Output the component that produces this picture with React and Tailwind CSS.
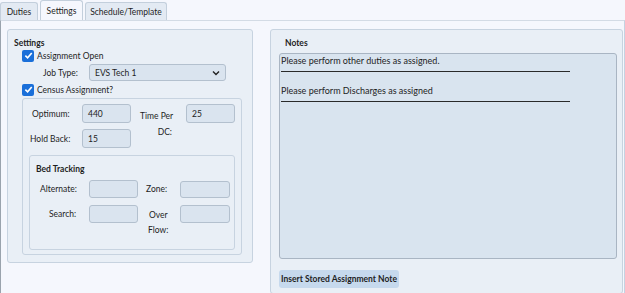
import React from "react";

function Check() {
  return (
    <span className="flex h-[12px] w-[12px] items-center justify-center rounded-[2px] bg-[#1a6fd9]">
      <svg width="9" height="9" viewBox="0 0 10 10">
        <path d="M1.5 5.2 L4 7.6 L8.6 2.2" stroke="white" strokeWidth="1.8" fill="none" />
      </svg>
    </span>
  );
}

function Input({ w = "w-[49px]", h = "h-[19px]", value = "" }) {
  return (
    <div className={`${w} ${h} flex items-center rounded-[3px] border border-[#b3c0ce] bg-[#dae4ef] pl-[5px] text-[8.5px] text-[#222]`}>
      {value}
    </div>
  );
}

export default function App() {
  return (
    <div className="h-[293px] w-[625px] overflow-hidden bg-[#f5f7fd] text-[8.5px] leading-[12px] text-[#1e1e1e]" style={{ fontFamily: 'Lato, "Open Sans", sans-serif' }}>
      {/* tabs */}
      <div className="flex h-[20px] items-end gap-[2px]">
        <div className="flex h-[18px] w-[38px] items-center justify-center rounded-t-[3px] border border-b-0 border-[#c3cfdc] bg-[#e3eaf3] pt-[1px]">Duties</div>
        <div className="flex h-[20px] w-[43px] items-center justify-center rounded-t-[3px] border border-b-0 border-[#c3cfdc] bg-[#f5f7fd] pt-[1px]">Settings</div>
        <div className="flex h-[18px] w-[82px] items-center justify-center rounded-t-[3px] border border-b-0 border-[#c3cfdc] bg-[#e3eaf3] pt-[1px]">Schedule/Template</div>
      </div>
      {/* content */}
      <div className="flex h-[273px] border-l border-r border-t border-l-[#9aa3ad] border-r-[#c5d3e2] border-t-[#d3dbe5] pl-[6px] pt-[8px]">
        {/* left panel */}
        <div className="h-[234px] w-[246px] rounded-[3px] border border-[#c7d3e0] bg-[#e9eff6] pl-[6px] pt-[7px]">
          <div className="font-bold">Settings</div>
          <div className="mt-[0px] flex h-[13px] items-center gap-[3px] pl-[8px]">
            <Check />
            <span>Assignment Open</span>
          </div>
          <div className="mt-[2px] flex h-[17px] items-center">
            <span className="w-[75px] pl-[29px]">Job Type:</span>
            <div className="flex h-[17px] w-[137px] items-center justify-between rounded-[3px] border border-[#b3c0ce] bg-[#dae4ef] pl-[5px] pr-[5px]">
              <span>EVS Tech 1</span>
              <svg width="8" height="6" viewBox="0 0 8 6"><path d="M1 1.5 L4 4.5 L7 1.5" stroke="#222" strokeWidth="1.4" fill="none" /></svg>
            </div>
          </div>
          <div className="mt-[2px] flex h-[13px] items-center gap-[3px] pl-[8px]">
            <Check />
            <span>Census Assignment?</span>
          </div>
          {/* inner box */}
          <div className="ml-[8px] mt-[2px] h-[157px] w-[220px] rounded-[3px] border border-[#c7d3e0] bg-[#e9eff6] pt-[5px]">
            <div className="flex h-[19px] items-center">
              <span className="w-[59px] pl-[9px]">Optimum:</span>
              <Input value="440" />
              <div className="w-[55px] self-start pl-[9px] pt-[4px] leading-[16px]">
                <div>Time Per</div>
                <div className="pr-[14px] text-right">DC:</div>
              </div>
              <Input value="25" />
            </div>
            <div className="mt-[6px] flex h-[19px] items-center">
              <span className="w-[59px] pl-[7px]">Hold Back:</span>
              <Input value="15" />
            </div>
            {/* bed tracking */}
            <div className="ml-[6px] mt-[7px] h-[95px] w-[206px] rounded-[3px] border border-[#c7d3e0] bg-[#e9eff6] pt-[7px]">
              <div className="pl-[6px] font-bold">Bed Tracking</div>
              <div className="mt-[5px] flex h-[18px] items-center">
                <span className="w-[59px] pl-[10px]">Alternate:</span>
                <Input h="h-[18px]" />
                <span className="w-[42px] pl-[8px]">Zone:</span>
                <Input w="w-[50px]" h="h-[17px]" />
              </div>
              <div className="mt-[7px] flex items-start">
                <span className="flex h-[18px] w-[59px] items-center pl-[19px]">Search:</span>
                <Input h="h-[18px]" />
                <div className="w-[42px] pl-[11px] pt-[3px] leading-[15px]">
                  <div>Over</div>
                  <div className="-ml-[1px]">Flow:</div>
                </div>
                <Input w="w-[50px]" h="h-[18px]" />
              </div>
            </div>
          </div>
        </div>
        {/* right panel */}
        <div className="ml-[17px] h-[265px] w-[353px] rounded-[3px] border border-[#c7d3e0] bg-[#e9eff6] pl-[8px] pt-[7px]">
          <div className="pl-[6px] font-bold">Notes</div>
          <div className="mt-[4px] h-[206px] w-[338px] rounded-[3px] border border-[#a9b5c3] bg-[#d9e4ef] pl-[1px] pt-[0px] text-[9px]">
            <div className="leading-[13px]">Please perform other duties as assigned.</div>
            <div className="mt-[4px] h-[1px] w-[289px] bg-[#2a2a2a]" />
            <div className="mt-[12px] leading-[13px]">Please perform Discharges as assigned</div>
            <div className="mt-[4px] h-[1px] w-[289px] bg-[#2a2a2a]" />
          </div>
          <div className="mt-[11px] flex h-[18px] w-[120px] items-center justify-center whitespace-nowrap rounded-[3px] bg-[#c6d9ed] text-[8.5px] font-bold">
            Insert Stored Assignment Note
          </div>
        </div>
      </div>
    </div>
  );
}
